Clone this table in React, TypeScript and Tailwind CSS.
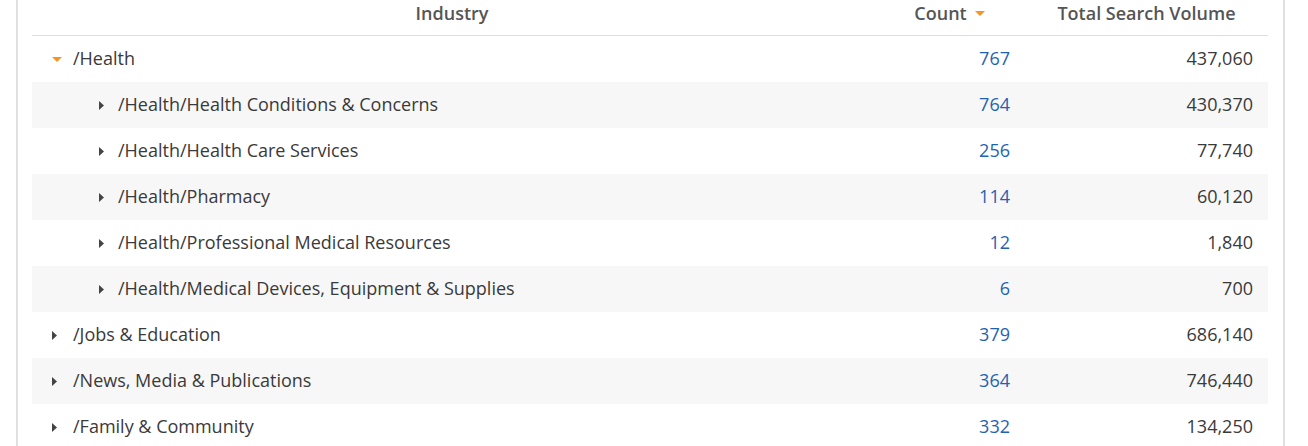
const rows: { label: string; level: number; open?: boolean; count: string; volume: string }[] = [
  { label: "/Health", level: 0, open: true, count: "767", volume: "437,060" },
  { label: "/Health/Health Conditions & Concerns", level: 1, count: "764", volume: "430,370" },
  { label: "/Health/Health Care Services", level: 1, count: "256", volume: "77,740" },
  { label: "/Health/Pharmacy", level: 1, count: "114", volume: "60,120" },
  { label: "/Health/Professional Medical Resources", level: 1, count: "12", volume: "1,840" },
  { label: "/Health/Medical Devices, Equipment & Supplies", level: 1, count: "6", volume: "700" },
  { label: "/Jobs & Education", level: 0, count: "379", volume: "686,140" },
  { label: "/News, Media & Publications", level: 0, count: "364", volume: "746,440" },
  { label: "/Family & Community", level: 0, count: "332", volume: "134,250" },
];

const DownArrow = ({ color }: { color: string }) => (
  <svg width="10" height="5" viewBox="0 0 10 5" className="shrink-0">
    <path d="M0 0 L10 0 L5 5 Z" fill={color} />
  </svg>
);

const RightArrow = () => (
  <svg width="5" height="9" viewBox="0 0 5 9" className="shrink-0">
    <path d="M0 0 L5 4.5 L0 9 Z" fill="#444" />
  </svg>
);

export default function App() {
  return (
    <div className="w-[1308px] h-[446px] overflow-hidden bg-white font-['Open_Sans',sans-serif] text-[18px]">
      <div className="ml-[16px] w-[1269px] h-[446px] border-l-2 border-r-2 border-[#e0e0e0] pl-[14px] pr-[15px]">
        <div className="flex h-[36px] border-b border-[#dedede] font-semibold text-[#555] leading-[26px]">
          <div className="w-[840px] text-center">Industry</div>
          <div className="w-[153px] flex justify-center items-start gap-[8px] pl-[2px]">
            <span>Count</span>
            <span className="mt-[11px] flex">
              <DownArrow color="#f7941d" />
            </span>
          </div>
          <div className="w-[243px] text-center">Total Search Volume</div>
        </div>
        {rows.map((r, i) => (
          <div
            key={r.label}
            className={`flex h-[46px] items-center pb-[2px] ${i % 2 === 1 ? "bg-[#f7f7f7]" : "bg-white"}`}
          >
            <div
              className={`w-[840px] flex items-center text-[#3a3a3a] ${r.level === 0 ? "pl-[20px]" : "pl-[67px]"}`}
            >
              <span className={`${r.level === 0 ? "w-[21px]" : "w-[19px]"} flex items-center pt-[2px]`}>
                {r.open ? <DownArrow color="#f7941d" /> : <RightArrow />}
              </span>
              <span>{r.label}</span>
            </div>
            <div className="w-[153px] text-right pr-[15px] text-[#1f63b0]">{r.count}</div>
            <div className="w-[243px] text-right pr-[15px] text-[#3a3a3a]">{r.volume}</div>
          </div>
        ))}
      </div>
    </div>
  );
}
